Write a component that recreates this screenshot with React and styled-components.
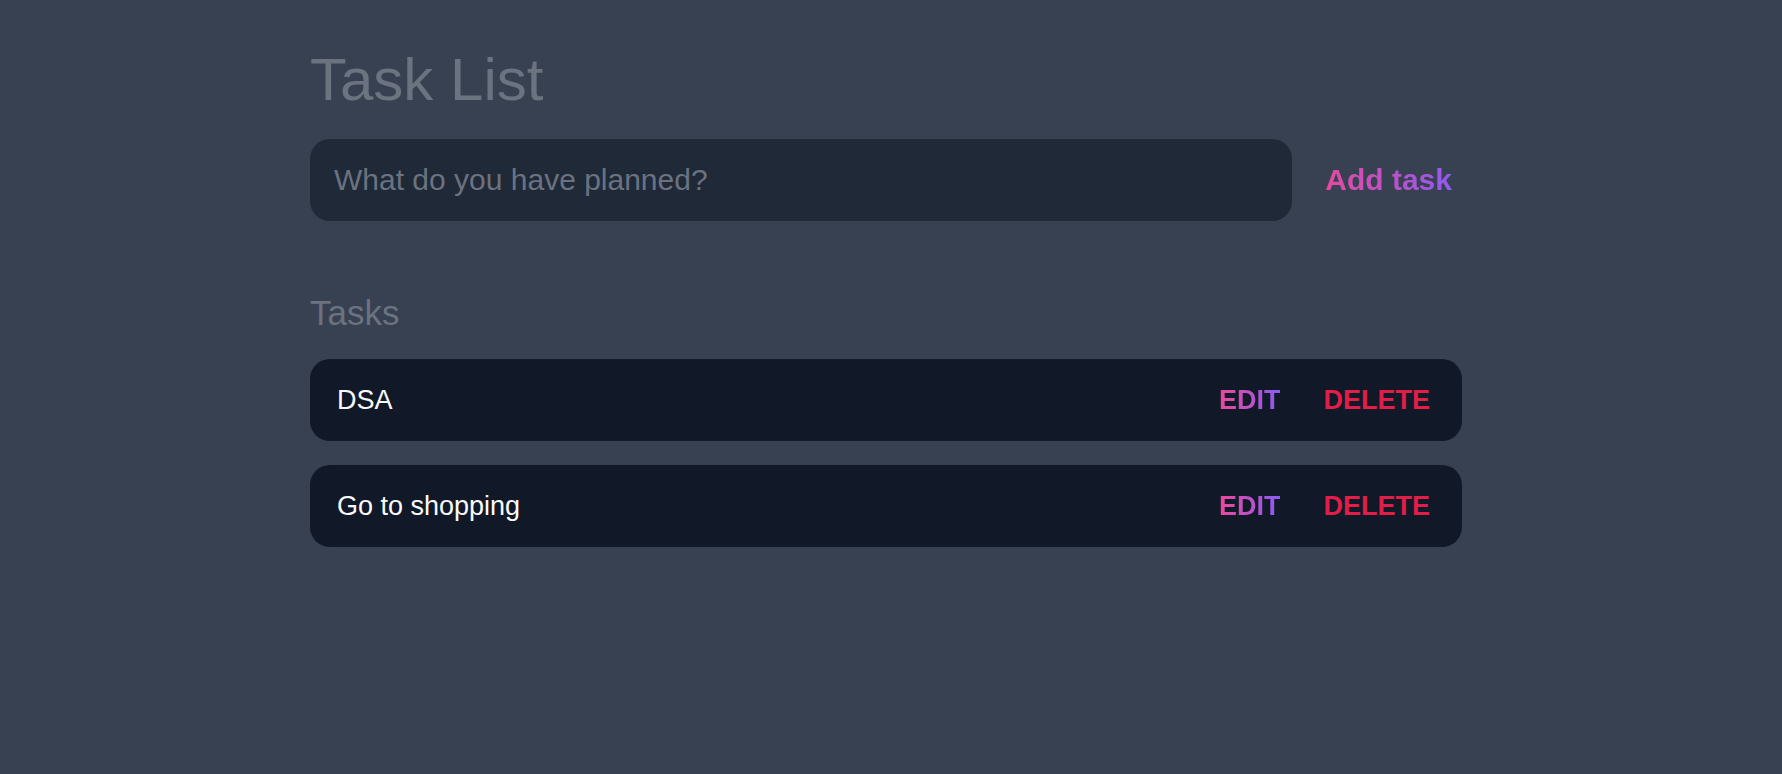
import styled, { createGlobalStyle } from "styled-components";

const GlobalStyle = createGlobalStyle`
  html, body {
    margin: 0;
    padding: 0;
    background: #374151;
  }

  body {
    font-family: "Liberation Sans", Arial, sans-serif;
  }
`;

const Page = styled.div`
  min-height: 774px;
  box-sizing: border-box;
  padding: 50px 10px 0 0;
`;

const Container = styled.main`
  width: 1152px;
  margin: 0 auto;
`;

const Title = styled.h1`
  margin: 0 0 29px;
  font-size: 60px;
  line-height: 60px;
  font-weight: 400;
  color: #6b7280;
`;

const Form = styled.form`
  display: flex;
  align-items: center;
  gap: 23px;
`;

const Input = styled.input`
  flex: 1;
  min-width: 0;
  box-sizing: border-box;
  height: 82px;
  padding: 0 24px;
  border: none;
  border-radius: 20px;
  background: #1f2937;
  color: #f9fafb;
  font-family: inherit;
  font-size: 30px;
  outline: none;

  &::placeholder {
    color: #6b7280;
  }
`;

const GradientText = styled.button`
  flex-shrink: 0;
  padding: 0;
  border: none;
  background: linear-gradient(to right, #ec4899, #8b5cf6);
  -webkit-background-clip: text;
  background-clip: text;
  color: transparent;
  font-family: inherit;
  font-weight: 700;
  font-size: ${(p) => p.$size}px;
  white-space: nowrap;
  text-transform: ${(p) => (p.$upper ? "uppercase" : "none")};
  cursor: pointer;
`;

const AddButton = styled(GradientText)`
  padding: 0 10px;
`;

const Heading = styled.h2`
  margin: 72px 0 26px;
  font-size: 35px;
  line-height: 40px;
  font-weight: 400;
  color: #6b7280;
`;

const List = styled.div`
  display: flex;
  flex-direction: column;
  gap: 24px;
`;

const Row = styled.div`
  display: flex;
  align-items: center;
  height: 82px;
  padding: 0 32px 0 27px;
  border-radius: 20px;
  background: #111827;
`;

const TaskText = styled.span`
  flex: 1;
  font-size: 27px;
  color: #f9fafb;
`;

const Actions = styled.div`
  display: flex;
  align-items: center;
  gap: 43px;
`;

const DeleteButton = styled.button`
  padding: 0;
  border: none;
  background: none;
  color: #e11d48;
  font-family: inherit;
  font-weight: 700;
  font-size: 27px;
  cursor: pointer;
`;

const tasks = ["DSA", "Go to shopping"];

export default function App() {
  return (
    <Page>
      <GlobalStyle />
      <Container>
        <Title>Task List</Title>
        <Form onSubmit={(e) => e.preventDefault()}>
          <Input placeholder="What do you have planned?" />
          <AddButton type="submit" $size={30}>
            Add task
          </AddButton>
        </Form>

        <Heading>Tasks</Heading>
        <List>
          {tasks.map((t) => (
            <Row key={t}>
              <TaskText>{t}</TaskText>
              <Actions>
                <GradientText $size={27} $upper>
                  Edit
                </GradientText>
                <DeleteButton>DELETE</DeleteButton>
              </Actions>
            </Row>
          ))}
        </List>
      </Container>
    </Page>
  );
}
